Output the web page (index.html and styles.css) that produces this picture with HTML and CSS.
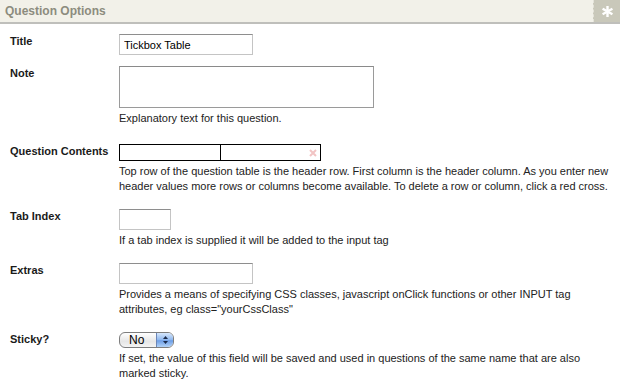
FILE: index.html
```html
<!DOCTYPE html>
<html lang="en">
<head>
  <meta charset="UTF-8">
  <title>Question Options</title>
  <link rel="stylesheet" href="styles.css">
</head>
<body>

<div class="panel-head">
  <span class="panel-title">Question Options</span>
  <span class="panel-star">
    <svg width="11" height="11" viewBox="0 0 11 11">
      <g stroke="#fff" stroke-width="2.4" stroke-linecap="square">
        <line x1="5.5" y1="1" x2="5.5" y2="10"/>
        <line x1="1.6" y1="3.3" x2="9.4" y2="7.7"/>
        <line x1="1.6" y1="7.7" x2="9.4" y2="3.3"/>
      </g>
    </svg>
  </span>
</div>

<div class="form">

  <div class="row first">
    <div class="label">Title</div>
    <div class="field">
      <input type="text" class="text-input wide" value="Tickbox Table">
    </div>
  </div>

  <div class="row note">
    <div class="label">Note</div>
    <div class="field">
      <textarea class="note-box"></textarea>
      <div class="help">Explanatory text for this question.</div>
    </div>
  </div>

  <div class="row">
    <div class="label">Question Contents</div>
    <div class="field">
      <div class="grid-table">
        <div class="grid-cell"></div>
        <div class="grid-cell">
          <svg class="cross" width="8" height="8" viewBox="0 0 8 8">
            <path d="M1 1 L7 7 M7 1 L1 7" stroke="#f2c4c4" stroke-width="2"/>
          </svg>
        </div>
      </div>
      <div class="help">Top row of the question table is the header row. First column is the header column. As you enter new header values more rows or columns become available. To delete a row or column, click a red cross.</div>
    </div>
  </div>

  <div class="row">
    <div class="label">Tab Index</div>
    <div class="field">
      <input type="text" class="text-input short">
      <div class="help">If a tab index is supplied it will be added to the input tag</div>
    </div>
  </div>

  <div class="row">
    <div class="label">Extras</div>
    <div class="field">
      <input type="text" class="text-input wide">
      <div class="help">Provides a means of specifying CSS classes, javascript onClick functions or other INPUT tag attributes, eg class="yourCssClass"</div>
    </div>
  </div>

  <div class="row">
    <div class="label">Sticky?</div>
    <div class="field">
      <div class="select-box">
        <span class="select-value">No</span>
        <span class="select-arrows">
          <svg width="7" height="10" viewBox="0 0 7 10">
            <path d="M3.5 1 L6 4 L1 4 Z" fill="#1a2a4a"/>
            <path d="M3.5 9 L6 6 L1 6 Z" fill="#1a2a4a"/>
          </svg>
        </span>
      </div>
      <div class="help">If set, the value of this field will be saved and used in questions of the same name that are also marked sticky.</div>
    </div>
  </div>

</div>

</body>
</html>
```

FILE: styles.css
```css
body {
  margin: 0;
  background-color: #fff;
  font-family: "Liberation Sans", Arial, sans-serif;
  font-size: 11px;
  color: #1a1a1a;
}

.panel-head {
  display: flex;
  justify-content: space-between;
  align-items: stretch;
  height: 22px;
  background-color: #f2f1e9;
  border-bottom: 2px solid #bfbfbb;
}

.panel-title {
  padding-left: 5px;
  line-height: 22px;
  font-size: 12px;
  font-weight: bold;
  color: #8c8c7e;
}

.panel-star {
  width: 26px;
  display: flex;
  align-items: center;
  justify-content: center;
  background-color: #c9c8ba;
  border-left: 1px dashed #e4e3da;
}

.form {
  padding: 10px 0 0 10px;
}

.row {
  display: flex;
  padding-bottom: 15px;
}

.row.first {
  padding-bottom: 11px;
}

.row.note {
  padding-bottom: 18px;
}

.label {
  width: 109px;
  font-weight: bold;
  line-height: 15px;
}

.field {
  width: 500px;
}

.text-input {
  display: block;
  box-sizing: border-box;
  height: 21px;
  margin: 0;
  padding: 2px 4px;
  border: 1px solid #c4c4c4;
  border-top-color: #8e8e8e;
  font-family: "Liberation Sans", Arial, sans-serif;
  font-size: 11px;
  color: #000;
}

.text-input.wide {
  width: 134px;
}

.text-input.short {
  width: 52px;
}

.note-box {
  display: block;
  box-sizing: border-box;
  width: 255px;
  height: 42px;
  margin: 0;
  border: 1px solid #9a9a9a;
  border-top-color: #8a8a8a;
  resize: none;
}

.help {
  margin-top: 3px;
  line-height: 15px;
  color: #222;
}

.grid-table {
  display: flex;
  box-sizing: border-box;
  width: 202px;
  height: 17px;
  border: 1px solid #000;
}

.grid-cell {
  box-sizing: border-box;
  width: 100px;
  position: relative;
}

.grid-cell + .grid-cell {
  border-left: 1px solid #000;
}

.cross {
  position: absolute;
  right: 3px;
  top: 4px;
}

.select-box {
  display: flex;
  box-sizing: border-box;
  width: 55px;
  height: 16px;
  border: 1px solid #7d7d7d;
  border-radius: 6px;
  overflow: hidden;
  background: linear-gradient(#ffffff, #e6e6e6 60%, #f4f4f4);
}

.select-value {
  flex: 1;
  padding-left: 9px;
  line-height: 14px;
  font-size: 12px;
  color: #000;
}

.select-arrows {
  width: 16px;
  display: flex;
  align-items: center;
  justify-content: center;
  border-left: 1px solid #6b86b8;
  background: linear-gradient(#d6e7fc, #8db6ee 50%, #6c9de6 55%, #b2d3f7);
}
```
